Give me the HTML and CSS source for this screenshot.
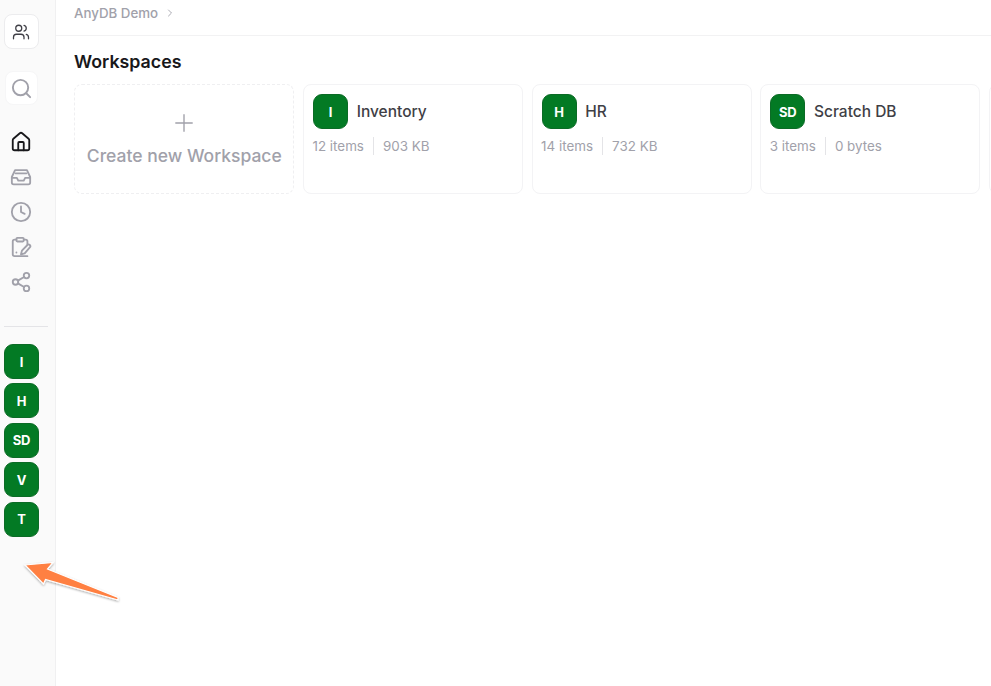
FILE: index.html
```html
<!DOCTYPE html>
<html lang="en">
<head>
<meta charset="utf-8">
<title>Workspaces</title>
<link rel="stylesheet" href="styles.css">
</head>
<body>
<div class="app">
  <aside class="sidebar">
    <button class="top-btn team">
      <svg class="ic-18" viewBox="0 0 24 24"><path d="M16 21v-2a4 4 0 0 0-4-4H6a4 4 0 0 0-4 4v2"/><circle cx="9" cy="7" r="4"/><path d="M22 21v-2a4 4 0 0 0-3-3.870"/><path d="M16 3.130a4 4 0 0 1 0 7.750"/></svg>
    </button>
    <button class="top-btn search">
      <svg class="ic-24 grey" viewBox="0 0 24 24"><circle cx="11" cy="11" r="8"/><path d="m21 21-3.800-3.800"/></svg>
    </button>
    <nav class="nav">
      <svg class="ic-22 dark" viewBox="0 0 24 24"><path d="M15 21v-8a1 1 0 0 0-1-1h-4a1 1 0 0 0-1 1v8"/><path d="M3 10a2 2 0 0 1 .7-1.500l7-6a2 2 0 0 1 2.600 0l7 6a2 2 0 0 1 .7 1.500v9a2 2 0 0 1-2 2H5a2 2 0 0 1-2-2z"/></svg>
      <svg class="ic-22 grey" viewBox="0 0 24 24"><path d="M2 13h5.500l1.500 3h6l1.500-3H22"/><path d="M5.500 4.500h13L22 12v6a2 2 0 0 1-2 2H4a2 2 0 0 1-2-2v-6z"/><path d="M6 8h12"/></svg>
      <svg class="ic-22 grey" viewBox="0 0 24 24"><circle cx="12" cy="12" r="10"/><path d="M12 6v6l4 2"/></svg>
      <svg class="ic-22 grey" viewBox="0 0 24 24"><rect x="7" y="2" width="8" height="4" rx="1"/><path d="M15 4h2a2 2 0 0 1 2 2v3"/><path d="M7 4H5a2 2 0 0 0-2 2v14a2 2 0 0 0 2 2h14"/><path d="M21.600 12.400a1.800 1.800 0 0 0-2.600-2.600L13 16l-1 4 4-1z"/><path d="M7 18h.01"/></svg>
      <svg class="ic-22 grey" viewBox="0 0 24 24"><circle cx="18" cy="5" r="3"/><circle cx="6" cy="12" r="3"/><circle cx="18" cy="19" r="3"/><path d="m8.600 13.500 6.800 4"/><path d="m15.400 6.500-6.800 4"/></svg>
    </nav>
    <div class="divider"></div>
    <div class="badges">
      <div class="badge">I</div>
      <div class="badge">H</div>
      <div class="badge">SD</div>
      <div class="badge">V</div>
      <div class="badge">T</div>
    </div>
  </aside>
  <main class="main">
    <header class="crumbs">
      <span>AnyDB Demo</span>
      <svg class="chev" viewBox="0 0 24 24"><path d="m9 18 6-6-6-6"/></svg>
    </header>
    <section class="content">
      <h1 class="title">Workspaces</h1>
      <div class="cards">
        <div class="card create">
          <svg class="plus" viewBox="0 0 24 24"><path d="M2.500 12h19M12 2.500v19"/></svg>
          <div class="create-label">Create new Workspace</div>
        </div>
        <div class="card">
          <div class="card-head"><div class="badge">I</div><span class="name">Inventory</span></div>
          <div class="meta"><span>12 items</span><i class="sep"></i><span>903 KB</span></div>
        </div>
        <div class="card">
          <div class="card-head"><div class="badge">H</div><span class="name">HR</span></div>
          <div class="meta"><span>14 items</span><i class="sep"></i><span>732 KB</span></div>
        </div>
        <div class="card">
          <div class="card-head"><div class="badge">SD</div><span class="name">Scratch DB</span></div>
          <div class="meta"><span>3 items</span><i class="sep"></i><span>0 bytes</span></div>
        </div>
        <div class="card"></div>
      </div>
    </section>
  </main>
</div>
<svg class="arrow" viewBox="0 0 991 686" width="991" height="686">
  <defs><filter id="sh" x="-20%" y="-20%" width="140%" height="140%"><feDropShadow dx="0" dy="1" stdDeviation="1.200" flood-color="#000" flood-opacity=".35"/></filter></defs>
  <path d="M25 565 53 562.500 47.500 569 118 597.500 118 600 45.500 579.500 43.500 584z" fill="#ff8042" stroke="#fff" stroke-width="1.200" stroke-linejoin="miter" filter="url(#sh)"/>
</svg>
</body>
</html>
```
FILE: styles.css
```css
* { box-sizing: border-box; }
html, body { margin: 0; height: 100%; overflow: hidden; background: #fff; }
body { font-family: Inter, "Liberation Sans", sans-serif; color: #18181b; }
svg { fill: none; stroke: currentColor; stroke-width: 2; stroke-linecap: round; stroke-linejoin: round; display: block; }

.app { display: flex; height: 686px; width: 991px; overflow: hidden; }

.sidebar {
  width: 56px; flex: none; height: 100%;
  background: #fafafa; border-right: 1px solid #f0f0f1;
  display: flex; flex-direction: column; align-items: flex-start;
  padding: 14px 0 0 4px;
}
.top-btn {
  width: 35px; height: 35px; padding: 0; border-radius: 8px; background: #fff;
  display: flex; align-items: center; justify-content: center;
  border: 1px solid #ececee; color: #3f3f46;
}
.top-btn.team { padding-right: 1px; }
.top-btn.search { margin: 22px 0 0 1px; width: 33px; height: 34px; border-color: #f6f6f7; }
.ic-18 { width: 18px; height: 18px; color: #3f3f46; stroke-width: 1.700; }
.ic-24 { width: 23px; height: 23px; }
.ic-22 { width: 22px; height: 22px; }
.grey { color: #a1a1aa; }
.dark { color: #18181b; }
.nav { display: flex; flex-direction: column; gap: 13px; margin: 26px 0 0 6px; }
.divider { width: 44px; height: 1px; background: #e4e4e7; margin-top: 33px; }
.badges { display: flex; flex-direction: column; gap: 4.400px; margin-top: 17px; }

.badge {
  width: 35px; height: 35px; border-radius: 9px; background: #037a24;
  border: 1px solid #0c6b26;
  color: #fff; font-size: 13px; font-weight: 700; letter-spacing: -0.1px;
  display: flex; align-items: center; justify-content: center; flex: none;
}

.main { flex: 1; min-width: 0; }
.crumbs {
  height: 36px; border-bottom: 1px solid #f2f2f3; padding: 0 0 12px 18px;
  display: flex; align-items: flex-end; gap: 6px;
  font-size: 13.300px; font-weight: 500; color: #a1a1aa; line-height: 20px;
}
.chev { width: 12px; height: 12px; margin-bottom: 4px; stroke-width: 1.800; }
.content { padding: 15px 0 0 18px; }
.title { margin: 0; font-size: 17.800px; font-weight: 600; line-height: 21px; color: #18181b; }
.cards { display: flex; gap: 8.670px; margin: 12px 0 0 0.300px; width: 1200px; }
.card {
  width: 220px; height: 110px; flex: none; border: 1px solid #f3f3f5; border-radius: 8px;
  padding: 9px; background: #fff;
}
.card.create {
  border: 1px dashed #efeff1; display: flex; flex-direction: column; align-items: center;
  padding: 27px 0 0;
}
.plus { width: 22px; height: 22px; color: #a1a1aa; stroke-width: 1.500; stroke-linecap: butt; }
.create-label { font-size: 17.500px; font-weight: 500; color: #a1a1aa; line-height: 24px; margin-top: 10px; }
.card-head { display: flex; align-items: center; gap: 9px; }
.name { font-size: 15.500px; font-weight: 500; color: #3f3f46; margin-left: -0.3px; }
.meta { display: flex; align-items: center; margin: 7px 0 0 -0.5px; font-size: 13.400px; color: #a1a1aa; line-height: 20px; }
.sep { width: 1px; height: 18px; background: #e4e4e7; margin: 0 9px; }

.arrow { position: absolute; left: 0; top: 0; pointer-events: none; }
```
